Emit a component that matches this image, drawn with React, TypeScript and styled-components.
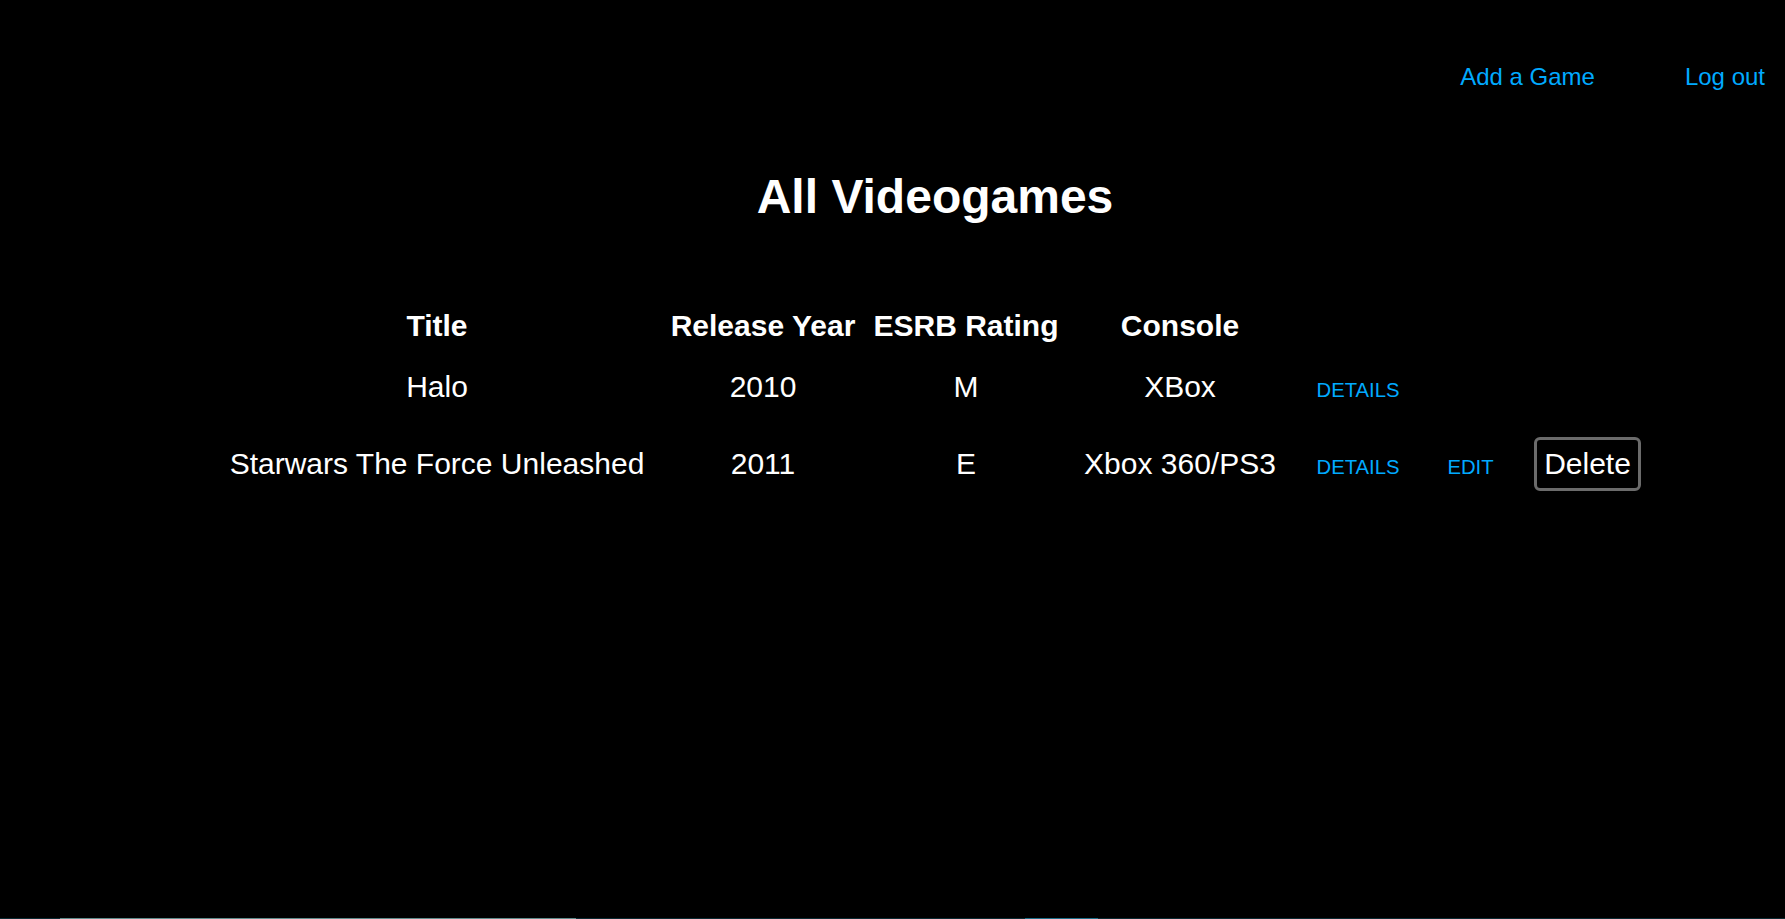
import React from "react";
import styled, { createGlobalStyle } from "styled-components";

const GlobalStyle = createGlobalStyle`
  html, body {
    margin: 0;
    padding: 0;
    background: #000;
  }
  body {
    font-family: "Liberation Sans", Arial, sans-serif;
    color: #fff;
  }
`;

const Page = styled.div`
  min-height: 100vh;
  display: flex;
  flex-direction: column;
  background: #000;
`;

const Nav = styled.nav`
  display: flex;
  justify-content: flex-end;
  gap: 90px;
  padding: 63px 20px 0 0;
`;

const NavLink = styled.a`
  font-size: 24px;
  line-height: 28px;
  color: #00aaff;
  text-decoration: none;
`;

const Main = styled.main`
  display: flex;
  flex-direction: column;
  align-items: center;
  padding-left: 85px;
`;

const Heading = styled.h1`
  margin: 78px 0 0;
  font-size: 48px;
  line-height: 56px;
  font-weight: bold;
  text-align: center;
`;

const Table = styled.div`
  margin-top: 84px;
  display: flex;
  flex-direction: column;
  gap: 27px;
`;

const Row = styled.div`
  display: grid;
  grid-template-columns: 441px 211px 195px 233px 123px 102px 132px;
  align-items: baseline;
  justify-items: center;
`;

const Cell = styled.div<{ $head?: boolean }>`
  font-size: 30px;
  line-height: 34px;
  font-weight: ${(p) => (p.$head ? "bold" : "normal")};
  color: #fff;
  white-space: nowrap;
`;

const ActionLink = styled.a`
  font-size: 20.3px;
  line-height: 24px;
  color: #00aaff;
  text-decoration: none;
  white-space: nowrap;
`;

const DeleteButton = styled.button`
  margin-top: 6px;
  font-family: "Liberation Sans", Arial, sans-serif;
  font-size: 30px;
  line-height: 34px;
  color: #fff;
  background: #000;
  border: 3px solid #6b6b6b;
  border-radius: 6px;
  padding: 7px 7px;
  cursor: pointer;
`;

const BottomStrip = styled.div`
  margin-top: auto;
  height: 1px;
  background: linear-gradient(
    to right,
    #0b2a33 0px,
    #0b2a33 60px,
    #5f8c8c 60px,
    #5f8c8c 576px,
    #0b2a33 576px,
    #0b2a33 1025px,
    #1b6f8a 1025px,
    #1b6f8a 1098px,
    #0b2a33 1098px
  );
`;

type Game = {
  title: string;
  year: string;
  rating: string;
  console: string;
  canEdit: boolean;
};

const games: Game[] = [
  { title: "Halo", year: "2010", rating: "M", console: "XBox", canEdit: false },
  {
    title: "Starwars The Force Unleashed",
    year: "2011",
    rating: "E",
    console: "Xbox 360/PS3",
    canEdit: true,
  },
];

export default function App() {
  return (
    <>
      <GlobalStyle />
      <Page>
        <Nav>
          <NavLink href="#">Add a Game</NavLink>
          <NavLink href="#">Log out</NavLink>
        </Nav>
        <Main>
          <Heading>All Videogames</Heading>
          <Table>
            <Row>
              <Cell $head>Title</Cell>
              <Cell $head>Release Year</Cell>
              <Cell $head>ESRB Rating</Cell>
              <Cell $head>Console</Cell>
              <span />
              <span />
              <span />
            </Row>
            {games.map((g) => (
              <Row key={g.title}>
                <Cell>{g.title}</Cell>
                <Cell>{g.year}</Cell>
                <Cell>{g.rating}</Cell>
                <Cell>{g.console}</Cell>
                <ActionLink href="#">DETAILS</ActionLink>
                {g.canEdit ? <ActionLink href="#">EDIT</ActionLink> : <span />}
                {g.canEdit ? <DeleteButton>Delete</DeleteButton> : <span />}
              </Row>
            ))}
          </Table>
        </Main>
        <BottomStrip />
      </Page>
    </>
  );
}
